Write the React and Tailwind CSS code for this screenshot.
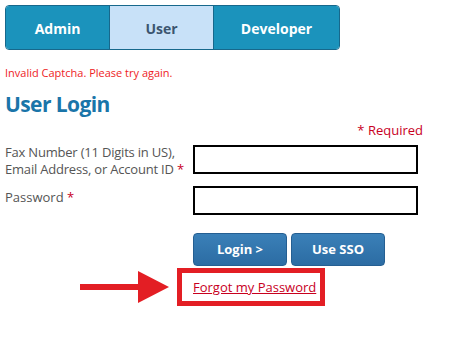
export default function App() {
    const font = { fontFamily: '"Open Sans", "Noto Sans", Arial, sans-serif' }
    return (
        <div style={font} className="w-[461px] h-[337px] bg-white pl-[5px] pt-[5px] relative overflow-hidden">
            {/* role tabs */}
            <div className="flex w-[335px] h-[45px] rounded-[4px] border border-[#17688c] overflow-hidden text-[14px] font-bold">
                <button className="w-[104px] pt-[2px] bg-[#1b93bc] text-white border-r border-[#17688c]">Admin</button>
                <button className="w-[104px] pt-[2px] bg-[#c8e1f8] text-[#3b5570] border-r border-[#17688c]">User</button>
                <button className="flex-1 pt-[2px] bg-[#1b93bc] text-white">Developer</button>
            </div>

            <p className="mt-[16px] text-[11px] leading-[14px] text-[#ee1c25]">Invalid Captcha. Please try again.</p>
            <h1 className="mt-[10px] text-[21px] leading-[28px] font-bold text-[#1a75a9] tracking-[-0.6px]">User Login</h1>

            <div className="w-[418px] text-right mt-[3px] text-[13px] leading-[18px] text-[#c8001e]">* Required</div>

            <div className="grid grid-cols-[188px_225px] gap-y-[8px] mt-[6px] text-[13px] leading-[17px] text-[#555]">
                <div className="tracking-[-0.2px] -mt-[1px]">
                    <div>Fax Number (11 Digits in US),</div>
                    <div>Email Address, or Account ID <span className="text-[#c8001e]">*</span></div>
                </div>
                <input className="h-[29px] border-2 border-black outline-none" />
                <label className="pt-[3px]">
                    Password <span className="text-[#c8001e]">*</span>
                </label>
                <input type="password" className="h-[29px] border-2 border-black outline-none" />
            </div>

            <div className="flex gap-[4px] ml-[188px] mt-[18px] text-[13px] font-bold text-white">
                <button className="w-[94px] h-[33px] rounded-[4px] bg-gradient-to-b from-[#3a80b8] to-[#2c6ca3] border border-[#255f92]">Login &gt;</button>
                <button className="w-[94px] h-[33px] rounded-[4px] bg-gradient-to-b from-[#3a80b8] to-[#2c6ca3] border border-[#255f92]">Use SSO</button>
            </div>

            <div className="flex items-center mt-[2px]">
                <svg width="172" height="32" viewBox="0 0 172 32" className="shrink-0">
                    <rect x="75" y="13" width="65" height="6" fill="#e31e24" />
                    <polygon points="133,0 164,16 133,32" fill="#e31e24" />
                </svg>
                <div className="w-[148px] h-[38px] border-[5px] border-[#e31e24] flex items-center pl-[11px]">
                    <a href="#" className="text-[13px] text-[#c8001e] underline leading-[16px]">Forgot my Password</a>
                </div>
            </div>
        </div>
    )
}
